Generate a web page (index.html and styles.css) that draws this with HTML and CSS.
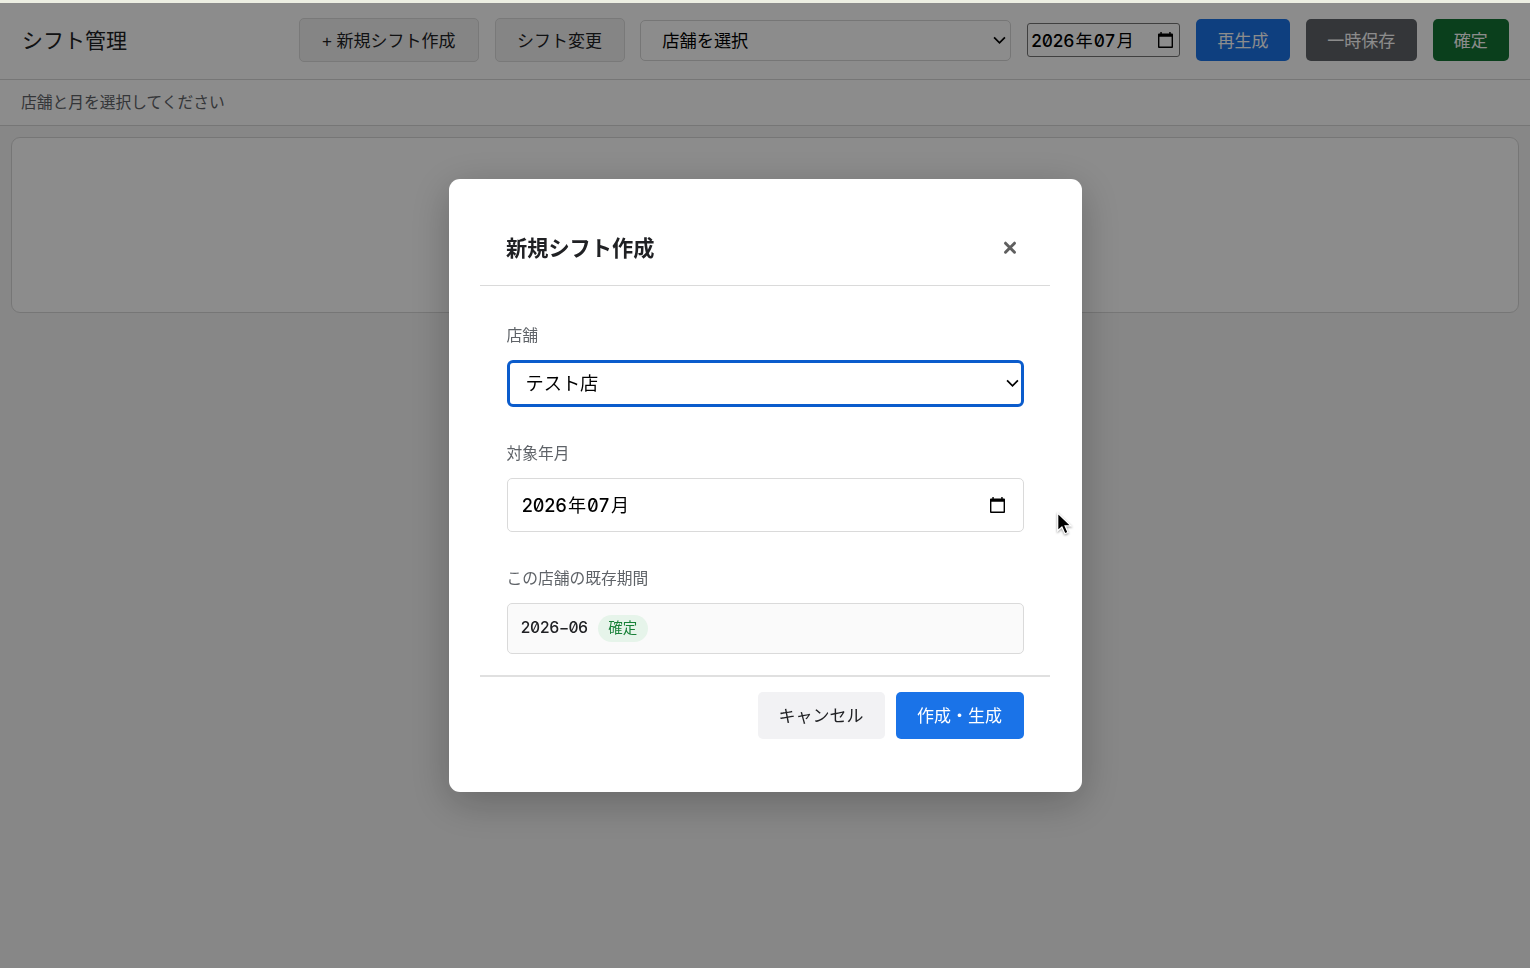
FILE: index.html
```html
<!DOCTYPE html>
<html lang="ja">
<head>
    <meta charset="UTF-8">
    <meta name="viewport" content="width=device-width, initial-scale=1.0">
    <title>シフト管理</title>
    <link rel="stylesheet" href="styles.css">
</head>
<body>
    <header class="header">
        <h1>シフト管理</h1>
        <button class="btn btn-outline btn-new">+ 新規シフト作成</button>
        <button class="btn btn-outline btn-change">シフト変更</button>
        <div class="select store-select">
            <span>店舗を選択</span>
            <svg class="chevron" viewBox="0 0 12 8"><path d="M1 1.2l5 5 5-5"/></svg>
        </div>
        <div class="month-input">
            <span class="month">2026<b>年</b>07<b>月</b></span>
            <svg class="calendar" viewBox="0 0 16 17"><path d="M2.500 0h1.500v1.500h8V0h1.500v1.500H15q1 0 1 1V16q0 1-1 1H1q-1 0-1-1V2.500q0-1 1-1h1.500zM1.500 5v10.500h13V5z" fill-rule="evenodd"/></svg>
        </div>
        <button class="btn btn-primary btn-regen">再生成</button>
        <button class="btn btn-gray">一時保存</button>
        <button class="btn btn-green">確定</button>
    </header>
    <div class="status">店舗と月を選択してください</div>
    <main class="card"></main>

    <div class="overlay">
        <div class="modal">
            <div class="modal-header">
                <h2>新規シフト作成</h2>
                <button class="close" aria-label="閉じる">
                    <svg viewBox="0 0 14 14"><path d="M2.500 2.200l9 9M11.500 2.200l-9 9"/></svg>
                </button>
            </div>
            <div class="modal-body">
                <div class="label">店舗</div>
                <div class="select modal-select">
                    <span>テスト店</span>
                    <svg class="chevron" viewBox="0 0 12 8"><path d="M1 1.2l5 5 5-5"/></svg>
                </div>
                <div class="label">対象年月</div>
                <div class="month-input modal-month">
                    <span class="month">2026<b>年</b>07<b>月</b></span>
                    <svg class="calendar" viewBox="0 0 16 17"><path d="M2.500 0h1.500v1.500h8V0h1.500v1.500H15q1 0 1 1V16q0 1-1 1H1q-1 0-1-1V2.500q0-1 1-1h1.500zM1.500 5v10.500h13V5z" fill-rule="evenodd"/></svg>
                </div>
                <div class="label">この店舗の既存期間</div>
                <div class="periods">
                    <span class="period">2026−06</span>
                    <span class="badge">確定</span>
                </div>
            </div>
            <div class="modal-footer">
                <button class="btn btn-cancel">キャンセル</button>
                <button class="btn btn-primary btn-create">作成・生成</button>
            </div>
        </div>
    </div>

    <svg class="cursor" viewBox="0 0 16 22"><path d="M1.500 1v17l4-3.700 2.900 6.500 3-1.300-2.800-6.300h5.600z"/></svg>
</body>
</html>
```
FILE: styles.css
```css
* {
    box-sizing: border-box;
}
body {
    margin: 0;
    height: 968px;
    overflow: hidden;
    border-top: 3px solid #eceee2;
    background: #f6f6f6;
    color: #202124;
    font-family: "Liberation Sans", "Noto Sans CJK JP", sans-serif;
}
h1, h2 {
    margin: 0;
}
button {
    padding: 0;
    border: none;
    font-family: inherit;
    color: inherit;
}

/* header */
.header {
    display: flex;
    align-items: center;
    gap: 15.8px;
    height: 77px;
    padding: 0 21px 2px 22px;
    background: #fff;
    border-bottom: 1px solid #d8d8d8;
}
.header h1 {
    flex: 1;
    padding-bottom: 3px;
    font-size: 21px;
    font-weight: 400;
    white-space: nowrap;
}
.btn {
    height: 42px;
    padding-bottom: 2px;
    border-radius: 5px;
    font-size: 17px;
    white-space: nowrap;
}
.btn-outline {
    height: 44px;
    background: #f3f3f3;
    border: 1px solid #dcdcdc;
}
.btn-new {
    width: 180px;
}
.btn-change {
    width: 130px;
}
.btn-primary {
    background: #1a73e8;
    color: #fff;
}
.btn-regen {
    width: 94px;
}
.btn-gray {
    width: 111px;
    background: #5f6368;
    color: #fff;
}
.btn-green {
    width: 76.5px;
    background: #137333;
    color: #fff;
}
.select {
    display: flex;
    align-items: center;
    justify-content: space-between;
    background: #fff;
    color: #000;
}
.store-select {
    width: 371px;
    height: 41px;
    padding: 0 4px 0 21px;
    border: 1px solid #d8d8d8;
    border-radius: 5px;
    font-size: 17.2px;
}
.select span {
    padding-bottom: 2px;
}
.chevron {
    width: 13px;
    height: 9px;
    fill: none;
    stroke: #000;
    stroke-width: 1.6;
}
.month-input {
    display: flex;
    align-items: center;
    justify-content: space-between;
    width: 153px;
    height: 34px;
    padding: 0 6px 0 3px;
    border: 1px solid #767676;
    border-radius: 3px;
    background: #fff;
    color: #000;
    font-size: 17.3px;
}
.month, .period {
    padding-bottom: 2px;
    font-family: Inter, "Noto Sans CJK JP", sans-serif;
    font-feature-settings: "tnum", "zero";
    font-weight: 500;
    letter-spacing: -0.5px;
    white-space: nowrap;
}
.month b {
    margin: 0 1.5px;
    font-weight: 400;
}
.calendar {
    width: 15px;
    height: 16px;
}

.status {
    height: 46px;
    padding-left: 21px;
    background: #fff;
    border-bottom: 1px solid #d8d8d8;
    color: #5f6368;
    font-size: 15.75px;
    line-height: 46px;
}
.card {
    height: 176px;
    margin: 11px 11px 0;
    background: #fff;
    border: 1px solid #d8d8d8;
    border-radius: 9px;
}

/* modal */
.overlay {
    position: fixed;
    inset: 3px 0 0;
    display: flex;
    align-items: center;
    justify-content: center;
    background: rgba(0, 0, 0, 0.45);
}
.modal {
    width: 633px;
    height: 613px;
    padding: 31px 31.5px;
    background: #fff;
    border-radius: 11px;
    box-shadow: 0 10px 40px rgba(0, 0, 0, 0.25);
}
.modal-header {
    display: flex;
    align-items: center;
    justify-content: space-between;
    height: 76px;
    padding: 0 33px 0 26px;
    border-bottom: 1px solid #dadada;
}
.modal-header h2 {
    padding-bottom: 3px;
    font-size: 21.2px;
    font-weight: 700;
}
.close {
    display: flex;
    background: none;
}
.close svg {
    width: 14px;
    height: 14px;
    stroke: #5f5f5f;
    stroke-width: 3;
    stroke-linecap: round;
}
.modal-body {
    height: 391px;
    padding: 37px 26.5px 0;
    border-bottom: 2px solid #e0e0e0;
}
.label {
    height: 24px;
    margin-bottom: 13px;
    color: #5f6368;
    font-size: 15.75px;
    line-height: 26px;
}
.modal-select {
    height: 47px;
    margin-bottom: 34px;
    padding: 0 2px 0 16px;
    border: 3px solid #0b5ccc;
    border-radius: 6px;
    font-size: 18.2px;
}
.modal-select span {
    padding-bottom: 3px;
}
.modal-month {
    width: 100%;
    height: 54px;
    margin-bottom: 34px;
    padding: 0 18px 0 14px;
    border: 1px solid #dadada;
    border-radius: 5px;
    font-size: 18.1px;
}
.periods {
    display: flex;
    align-items: center;
    gap: 10px;
    height: 51px;
    padding: 0 13px;
    background: #fafafa;
    border: 1px solid #dadada;
    border-radius: 5px;
}
.period {
    font-size: 15.6px;
}
.badge {
    width: 50px;
    height: 27px;
    border-radius: 14px;
    background: #e6f4ea;
    color: #188038;
    font-size: 14.5px;
    line-height: 26px;
    text-align: center;
}
.modal-footer {
    display: flex;
    justify-content: flex-end;
    gap: 11px;
    padding: 15px 26.5px 0;
}
.modal-footer .btn {
    height: 47px;
}
.btn-cancel {
    width: 127px;
    background: #f2f2f4;
}
.btn-create {
    width: 128px;
}

.cursor {
    position: fixed;
    left: 1056px;
    top: 512px;
    width: 17px;
    height: 23px;
    stroke: #fff;
    stroke-width: 1.2;
    filter: drop-shadow(0 1px 1px rgba(0, 0, 0, 0.4));
}
```
